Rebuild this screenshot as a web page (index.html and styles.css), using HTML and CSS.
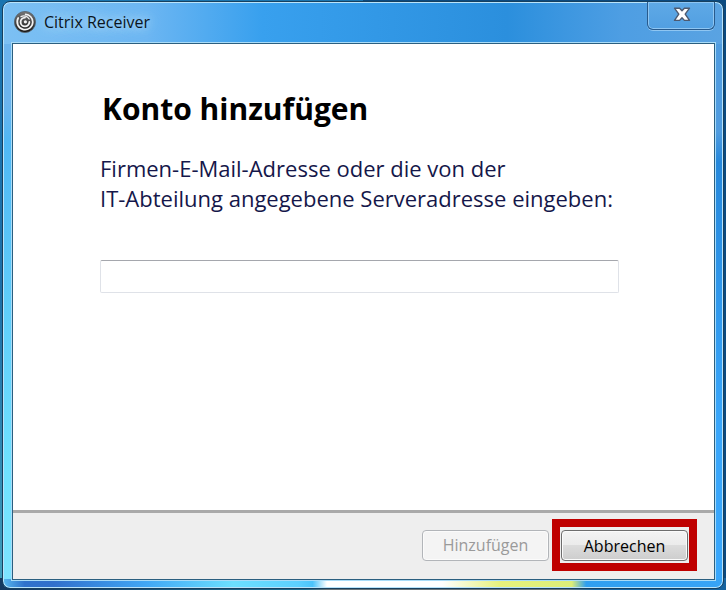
FILE: index.html
```html
<!DOCTYPE html>
<html lang="de">
<head>
    <meta charset="UTF-8">
    <title>Citrix Receiver</title>
    <link rel="stylesheet" href="styles.css">
</head>
<body>
    <div class="window">
        <header class="titlebar">
            <svg class="app-icon" viewBox="0 0 22 22">
                <defs>
                    <linearGradient id="iconFill" x1="0" y1="0" x2="0" y2="1">
                        <stop offset="0" stop-color="#777"/>
                        <stop offset="1" stop-color="#141414"/>
                    </linearGradient>
                </defs>
                <circle cx="11" cy="11" r="10.6" fill="url(#iconFill)" stroke="#56626c" stroke-width=".8"/>
                <g fill="none" stroke="#f2f2f2" stroke-linecap="round">
                    <path d="M4.2 7A7.8 7.8 0 1 0 18.8 11C18.8 7 15.6 3.6 11.6 3.4" stroke-width="1.7"/>
                    <path d="M11 6.6A4.4 4.4 0 1 0 15.4 11" stroke-width="1.8"/>
                    <path d="M7 5.6C9.6 4.2 13.6 5 15.2 8" stroke-width="1.2"/>
                </g>
                <circle cx="11.4" cy="10.8" r="1.6" fill="#f2f2f2"/>
            </svg>
            <span class="title">Citrix Receiver</span>
            <button class="close" type="button" aria-label="Schließen">
                <svg width="18" height="15" viewBox="0 0 18 15">
                    <path d="M1.5 1.2H6.6L9 3.8L11.4 1.2H16.5L12.2 7.2L16.5 13.4H11.4L9 10.8L6.6 13.4H1.5L5.8 7.2Z" fill="#fff" stroke="#4d5a70" stroke-width="1.4" stroke-linejoin="round"/>
                </svg>
            </button>
        </header>

        <form class="client">
            <main class="content">
                <h1>Konto hinzufügen</h1>
                <label for="address">Firmen-E-Mail-Adresse oder die von der<br>IT-Abteilung angegebene Serveradresse eingeben:</label>
                <input type="text" id="address">
            </main>
            <footer class="buttons">
                <button class="btn" type="submit" disabled>Hinzufügen</button>
                <div class="highlight">
                    <button class="btn" type="button">Abbrechen</button>
                </div>
            </footer>
        </form>
    </div>
</body>
</html>
```
FILE: styles.css
```css
* {
    box-sizing: border-box;
}

body {
    display: flex;
    min-height: 100vh;
    margin: 0;
    padding: 1px 2px;
    /* desktop behind the window */
    background:
        linear-gradient(90deg, #14385f, #1d6b8f 42%, #6b7478 45%, #6b7478 78%, #17639f 82%) bottom / 100% 12px no-repeat,
        linear-gradient(90deg, transparent 50%, #0b4a80 50%),
        linear-gradient(#1a75b0, #1c6fa8 50%, #3fa0bd);
    font-family: "Open Sans", "Noto Sans", sans-serif;
}

.window {
    flex: 1;
    display: flex;
    flex-direction: column;
    padding: 0 8px 8px 9px;
    border: 1px solid #17405f;
    border-radius: 8px;
    /* glass frame: bottom strip, title bar, then the two sides */
    background:
        linear-gradient(90deg, #58b8ee, #2f72cc 3%, #3070cc 7%, #41a8f5 20%, #6ce0ff 32%, #5cd0ff 41%, #4cc4fb 43%, #fff 45%, #fff 61%, #e6f27c 69%, #dcee78 79%, #2f9ff0 81%, #38a4f6) bottom / 100% 9px no-repeat,
        linear-gradient(90deg, #7cc0f3, #6cb6f2 20%, #38a0ee 36%, #2b8fdd 70%, #4e9ee3 86%, #5aa3e2) top / 100% 42px no-repeat,
        linear-gradient(#6cb4ee, #6cb4ee 100px, #50b8f5 140px, #6fe2ff 470px, #7fe4ff) left / 12px 100% no-repeat,
        linear-gradient(#4f9ce0, #4f9ce0 130px, #2588dc 160px, #38a6fb 420px, #38a6fb) right / 12px 100% no-repeat;
    box-shadow: inset 0 0 0 1px #b9e4fb;
}

.titlebar {
    display: flex;
    align-items: flex-start;
    height: 41px;
}

.app-icon {
    width: 22px;
    height: 22px;
    margin: 9px 0 0 2px;
}

.title {
    margin: 8px auto 0 8px;
    font-size: 16px;
    line-height: 24px;
    color: #0a1420;
    text-shadow: 0 0 8px #b5dcfa, 0 0 14px #b5dcfa;
}

.close {
    display: flex;
    justify-content: center;
    width: 68px;
    height: 28px;
    padding: 5px 0 0 2px;
    border: 1px solid #285a8c;
    border-top: 0;
    border-radius: 0 0 6px 6px;
    background: linear-gradient(#5fa9e6, #519fe1);
    box-shadow: inset 0 0 0 1px #8fc6f2, 0 1px 0 #8fc6f2;
}

.client {
    flex: 1;
    display: flex;
    flex-direction: column;
    border: 1px solid #2b5f80;
    background: #fff;
    box-shadow: 0 0 0 1px #a9dcf8;
}

.content {
    flex: 1;
    padding: 42px 95px 40px 87px;
}

h1 {
    margin: 0 0 21px 2px;
    font-size: 30px;
    line-height: 46px;
    color: #000;
}

label {
    display: block;
    margin-bottom: 47px;
    font-size: 22px;
    line-height: 30px;
    color: #15174a;
    white-space: nowrap;
}

#address {
    display: block;
    width: 100%;
    height: 33px;
    padding: 0 8px;
    border: 1px solid #dfe2e8;
    border-top-color: #a5a7ad;
    border-radius: 2px;
    background: #fff;
    font: inherit;
    font-size: 18px;
}

.buttons {
    display: flex;
    justify-content: flex-end;
    align-items: center;
    gap: 3px;
    padding: 6px 17px 8px;
    border-top: 3px solid #a9a9a9;
    background: #eee;
}

.btn {
    display: block;
    width: 127px;
    height: 31px;
    padding: 0;
    border: 1px solid #6e6e6e;
    border-radius: 4px;
    background: linear-gradient(#f3f3f3, #ebebeb 48%, #dcdcdc 50%, #cdcdcd);
    box-shadow: inset 0 0 0 1px #fbfbfb;
    font-family: inherit;
    font-size: 16px;
    line-height: 24px;
    color: #000;
}

.btn:disabled {
    border-color: #b2b5b9;
    background: #f4f4f4;
    color: #9a9a9a;
}

/* red frame round the button to press */
.highlight {
    padding: 3px 1px 2px;
    border: 8px solid #bf0000;
}
```
